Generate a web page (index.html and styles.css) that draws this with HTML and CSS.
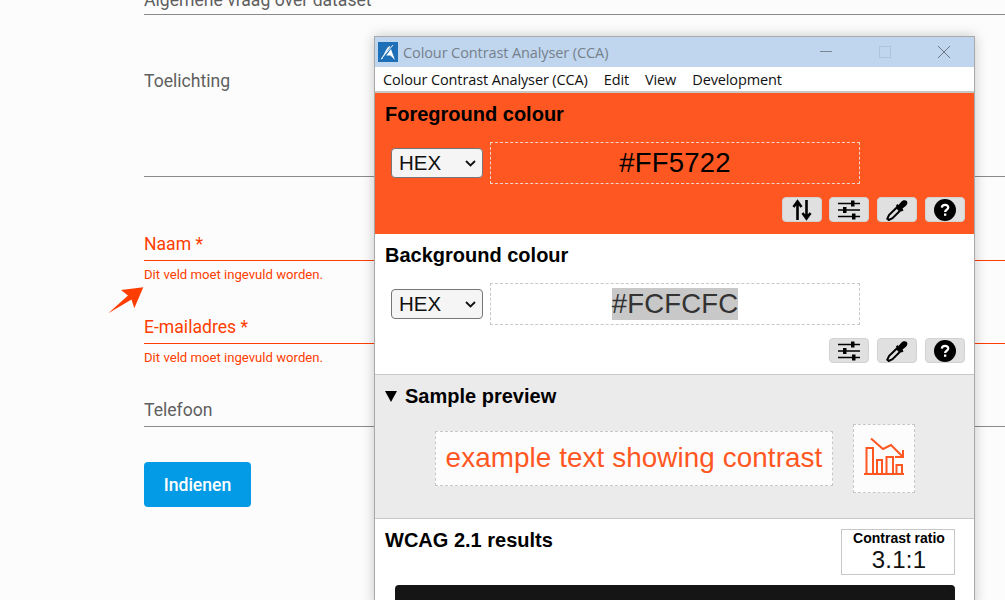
FILE: index.html
```html
<!DOCTYPE html>
<html lang="nl">
<head>
<meta charset="utf-8">
<title>Formulier met Colour Contrast Analyser</title>
<link rel="stylesheet" href="styles.css">
</head>
<body>
<main class="form">
  <div class="field first"><label>Algemene vraag over dataset</label></div>
  <div class="field area"><label>Toelichting</label></div>
  <div class="field error name"><label>Naam *</label></div>
  <p class="msg">Dit veld moet ingevuld worden.</p>
  <div class="field error mail"><label>E-mailadres *</label></div>
  <p class="msg">Dit veld moet ingevuld worden.</p>
  <div class="field phone"><label>Telefoon</label></div>
  <button class="submit">Indienen</button>
</main>
<svg class="arrow" width="40" height="30" viewBox="0 0 40 30"><path d="M.3 27.300L20 9.500L13 4L35.300 1.300L26.300 22.300L23.500 13.500Z" fill="#ff3d00"/></svg>

<section class="cca">
  <header class="titlebar">
    <svg class="logo" width="20" height="20" viewBox="0 0 20 20"><rect width="20" height="20" fill="#1d6fb8"/><path d="M3 18 L8 8 L10 5 L12 4 L14 10 L17 18 L12.500 13.500 L7.500 13.500 Z" fill="#fff"/><path d="M16 1 L5.500 16" stroke="#1d6fb8" stroke-width="2"/><path d="M3 17 L15 3" stroke="#fff" stroke-width=".9"/></svg>
    <span class="wintitle">Colour Contrast Analyser (CCA)</span>
    <div class="winbtns">
      <svg width="14" height="14" viewBox="0 0 14 14"><path d="M1 6.500H13" stroke="#7d8791" stroke-width="1"/></svg>
      <svg width="14" height="14" viewBox="0 0 14 14"><rect x="1.500" y="1.500" width="11" height="11" fill="none" stroke="#afc4d9"/></svg>
      <svg width="14" height="14" viewBox="0 0 14 14"><path d="M1 1L13 13M13 1L1 13" stroke="#6f7882" stroke-width="1"/></svg>
    </div>
  </header>
  <nav class="menu"><span>Colour Contrast Analyser (CCA)</span><span>Edit</span><span>View</span><span>Development</span></nav>

  <section class="panel fg">
    <h2>Foreground colour</h2>
    <div class="inputs">
      <div class="select">HEX<svg width="11" height="7" viewBox="0 0 11 7"><path d="M1 1L5.500 5.500L10 1" fill="none" stroke="#111" stroke-width="1.800"/></svg></div>
      <div class="value light">#FF5722</div>
    </div>
    <div class="tools">
      <button class="tool"><svg width="22" height="22" viewBox="0 0 22 22"><path d="M6.500 21V3M2.500 8L6.500 2.500L10.500 8M15.500 1V19M11.500 14L15.500 19.500L19.500 14" fill="none" stroke="#000" stroke-width="2.600"/></svg></button>
      <button class="tool"><svg width="24" height="20" viewBox="0 0 24 20"><use href="#sliders"/></svg></button>
      <button class="tool"><svg width="22" height="22" viewBox="0 0 22 22"><use href="#dropper"/></svg></button>
      <button class="tool"><svg width="22" height="22" viewBox="0 0 22 22"><use href="#help"/></svg></button>
    </div>
  </section>

  <section class="panel bg">
    <h2>Background colour</h2>
    <div class="inputs">
      <div class="select">HEX<svg width="11" height="7" viewBox="0 0 11 7"><path d="M1 1L5.500 5.500L10 1" fill="none" stroke="#111" stroke-width="1.800"/></svg></div>
      <div class="value"><span class="selected">#FCFCFC</span></div>
    </div>
    <div class="tools">
      <button class="tool"><svg width="24" height="20" viewBox="0 0 24 20"><g id="sliders" stroke="#000" fill="#000"><path d="M1 3.500H23M1 10H23M1 16.500H23" stroke-width="1.600" fill="none"/><rect x="14" y="0.500" width="3.500" height="6" stroke="none"/><rect x="6" y="7" width="3.500" height="6" stroke="none"/><rect x="15" y="13.500" width="3.500" height="6" stroke="none"/></g></svg></button>
      <button class="tool"><svg width="22" height="22" viewBox="0 0 22 22"><g id="dropper"><path d="M12.500 6L15.500 2.500C17 .8 19.800 .9 20.800 2C21.900 3.300 21.400 5.600 19.700 7L16.500 9.500L17.500 11.500L15.500 12.500L9.800 6.800L11.500 5Z" fill="#000"/><path d="M10.800 8.500L14 11.700L6.500 19.200L2.800 21L1.300 19.700L3 16Z" fill="none" stroke="#000" stroke-width="2"/></g></svg></button>
      <button class="tool"><svg width="22" height="22" viewBox="0 0 22 22"><g id="help"><circle cx="11" cy="11" r="11" fill="#000"/><path d="M7.800 8.600C7.900 6.700 9.300 5.800 11.100 5.800C13 5.800 14.300 6.900 14.300 8.500C14.300 10.700 11.100 10.800 11.100 13" fill="none" stroke="#fff" stroke-width="2.200"/><rect x="10" y="14.500" width="2.300" height="2.300" fill="#fff"/></g></svg></button>
    </div>
  </section>

  <section class="sample">
    <h2><span class="caret"></span>Sample preview</h2>
    <div class="preview">
      <div class="sampletext">example text showing contrast</div>
      <div class="sampleicon">
        <svg width="42" height="42" viewBox="0 0 42 42" fill="none" stroke="#ff5722" stroke-width="2"><path d="M8 .5L20 11L28 7L40 19M40 12V19H32"/><path d="M1 36H41" stroke-width="2"/><path d="M3.500 36V10H10V36M14 36V22H19V36M23.500 36V19H30V36M33.500 36V27H39V36"/></svg>
      </div>
    </div>
  </section>

  <section class="results">
    <div class="reshead">
      <h2>WCAG 2.1 results</h2>
      <div class="ratio"><b>Contrast ratio</b><span>3.1:1</span></div>
    </div>
    <div class="darkbar"></div>
  </section>
</section>
</body>
</html>
```
FILE: styles.css
```css
* { box-sizing: border-box; }
html, body { margin: 0; height: 600px; overflow: hidden; }
body { background: #fcfcfc; font-family: Roboto, sans-serif; position: relative; }

.form { padding-left: 144px; margin-top: -12px; }
.field { border-bottom: 1px solid #8a8a8a; display: flex; align-items: flex-start; color: #5f5f5f; font-size: 17.600px; line-height: 24px; }
.field label { display: block; }
.first { height: 27px; }
.area { height: 162px; padding-top: 54px; }
.error { color: #ff3d00; border-bottom-color: #ff3d00; }
.name { height: 84px; padding-top: 55px; }
.mail { height: 44px; padding-top: 15px; }
.phone { height: 44px; padding-top: 15px; }
.msg { margin: 0; height: 39px; padding-top: 7px; font-size: 13.150px; line-height: 14px; color: #ff3d00; }
.submit { display: block; margin-top: 35px; width: 107px; height: 45px; border: 0; border-radius: 4px; background: #039be5; color: #fff; font: 500 17.600px Roboto, sans-serif; }

.arrow { position: absolute; left: 108px; top: 286px; }

.cca { position: absolute; left: 374px; top: 36px; width: 601px; height: 570px; background: #fff; border: 1px solid #a9a9a9; box-shadow: 0 0 12px rgba(0,0,0,.22); font-family: "Liberation Sans", Arial, sans-serif; color: #000; overflow: hidden; }
.titlebar { height: 30px; background: #bfd6ee; display: flex; align-items: center; padding-left: 3px; }
.logo { flex: none; margin-right: 5px; }
.wintitle { font: 14.500px "Open Sans", "Noto Sans", sans-serif; color: #76808b; letter-spacing: -.1px; }
.winbtns { margin-left: auto; display: flex; gap: 45px; padding-right: 23px; }
.menu { height: 26px; background: #fff; border-bottom: 2px solid #c8c8c8; display: flex; gap: 16px; padding-left: 8px; align-items: center; font: 14.500px "Open Sans", "Noto Sans", sans-serif; color: #111; letter-spacing: -.12px; }

h2 { margin: 0; font-size: 20px; line-height: 24px; font-weight: 700; }
.panel { padding: 9px 9px 0 10px; }
.fg { background: #ff5722; height: 141px; }
.bg { background: #fff; border-bottom: 1px solid #c8c8c8; height: 141px; }
.inputs { display: flex; align-items: center; gap: 7px; margin: 16px 0 0 6px; }
.select { width: 92px; height: 30px; background: #f5f5f5; border: 1px solid #767676; border-radius: 4px; display: flex; align-items: center; justify-content: space-between; padding: 0 6px 0 7px; font-size: 20.500px; color: #111; }
.value { width: 370px; height: 42px; border: 1px dashed #c8c8c8; display: flex; align-items: center; justify-content: center; font-size: 27.500px; letter-spacing: .2px; color: #111; }
.value.light { border-color: #f0d4c8; color: #000; }
.selected { background: #c8c8c8; color: #333; }
.tools { display: flex; justify-content: flex-end; gap: 7.700px; margin: 13px .4px 0 0; }
.tool { width: 40px; height: 25px; padding: 0; background: #e0e0e0; border: 1px solid #d2d2d2; border-radius: 4px; display: flex; align-items: center; justify-content: center; overflow: visible; }

.sample { height: 144px; background: #ebebeb; border-bottom: 1px solid #c8c8c8; padding: 9px 10px 0; }
.sample h2 { display: flex; align-items: center; gap: 8px; }
.caret { width: 0; height: 0; border: 6.500px solid transparent; border-top: 11px solid #000; border-bottom: 0; }
.preview { display: flex; align-items: center; gap: 20px; margin: 16px 0 0 50px; }
.sampletext { width: 398px; height: 55px; padding-bottom: 2px; background: #fcfcfc; border: 1px dashed #c8c8c8; display: flex; align-items: center; justify-content: center; font-size: 27.800px; color: #ff5722; letter-spacing: .1px; }
.sampleicon { width: 62px; height: 69px; background: #fcfcfc; border: 1px dashed #c8c8c8; display: flex; align-items: center; justify-content: center; }

.results { padding: 9px 19px 0 10px; }
.reshead { display: flex; justify-content: space-between; align-items: flex-start; height: 57px; }
.ratio { width: 114px; height: 46px; margin-top: 1px; padding-left: 2px; border: 1px solid #c8c8c8; display: flex; flex-direction: column; align-items: center; }
.ratio b { font-size: 14px; line-height: 15px; margin-top: 1px; }
.ratio span { font-size: 24px; line-height: 28px; letter-spacing: .2px; color: #111; }
.darkbar { margin-left: 10px; height: 60px; background: #151515; border-radius: 4px; }
```
